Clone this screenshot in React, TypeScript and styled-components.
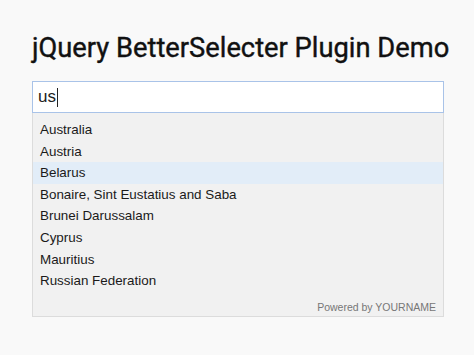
import React from "react";
import styled, { createGlobalStyle } from "styled-components";

const Global = createGlobalStyle`
  html, body { margin: 0; padding: 0; background: #f9f9f9; }
  body { font-family: "Liberation Sans", Arial, sans-serif; }
`;

const Page = styled.div`
  padding: 30px 30px 0 32px;
  width: 412px;
`;

const Title = styled.h1`
  margin: 0 0 14px 0;
  font-family: Roboto, "Liberation Sans", sans-serif;
  font-weight: 400;
  font-size: 27.3px;
  line-height: 37px;
  color: #111;
  white-space: nowrap;
  -webkit-text-stroke: 0.4px #111;
`;

const Input = styled.div`
  box-sizing: border-box;
  height: 32px;
  border: 1.5px solid #a9c3e8;
  background: #fff;
  padding: 0 5px;
  display: flex;
  align-items: center;
  font-size: 17px;
  color: #222;
`;

const Caret = styled.span`
  display: inline-block;
  width: 1px;
  height: 19px;
  background: #222;
  margin-left: 1px;
`;

const Menu = styled.div`
  box-sizing: border-box;
  background: #f1f1f1;
  border: 1px solid #dcdcdc;
  border-top: none;
  padding-top: 6px;
  height: 204px;
  display: flex;
  flex-direction: column;
`;

const Item = styled.div<{ $active?: boolean }>`
  height: 21.6px;
  line-height: 21.6px;
  padding-left: 7px;
  font-size: 13.4px;
  color: #1a1a1a;
  background: ${(p) => (p.$active ? "#e2edf8" : "transparent")};
`;

const Footer = styled.div`
  margin-top: auto;
  text-align: right;
  padding: 0 7px 3px 0;
  font-size: 10.5px;
  color: #777;
`;

const items = [
  "Australia",
  "Austria",
  "Belarus",
  "Bonaire, Sint Eustatius and Saba",
  "Brunei Darussalam",
  "Cyprus",
  "Mauritius",
  "Russian Federation",
];

export default function App() {
  return (
    <>
      <Global />
      <Page>
        <Title>jQuery BetterSelecter Plugin Demo</Title>
        <Input>
          us<Caret />
        </Input>
        <Menu>
          {items.map((it) => (
            <Item key={it} $active={it === "Belarus"}>
              {it}
            </Item>
          ))}
          <Footer>Powered by YOURNAME</Footer>
        </Menu>
      </Page>
    </>
  );
}
